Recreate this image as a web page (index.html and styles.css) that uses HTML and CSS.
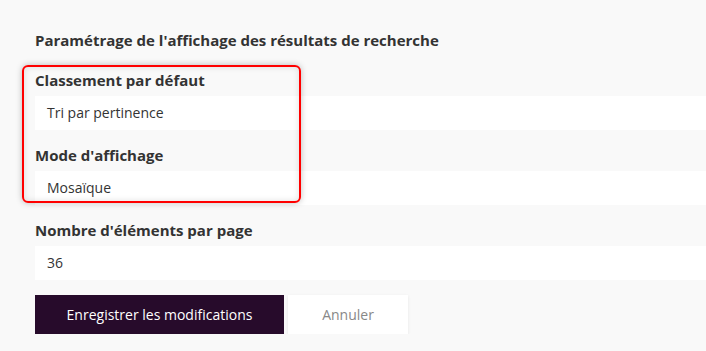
FILE: index.html
```html
<!DOCTYPE html>
<html>

<head>
    <meta charset="utf-8">
    <link rel="stylesheet" href="styles.css">
</head>

<body>
    <div id="page">
        <h3 class="title">Paramétrage de l'affichage des résultats de recherche</h3>

        <div class="field">
            <label>Classement par défaut</label>
            <div class="input">Tri par pertinence</div>
        </div>

        <div class="field">
            <label>Mode d'affichage</label>
            <div class="input">Mosaïque</div>
        </div>

        <div class="field">
            <label>Nombre d'éléments par page</label>
            <div class="input">36</div>
        </div>

        <div class="actions">
            <button class="btn-save">Enregistrer les modifications</button>
            <button class="btn-cancel">Annuler</button>
        </div>

        <!-- cadre rouge d'annotation -->
        <div class="highlight"></div>
    </div>
</body>

</html>
```

FILE: styles.css
```css
* {
    box-sizing: border-box;
}

body {
    margin: 0;
    background-color: #f9f9f9;
    font-family: "Open Sans", "Noto Sans", sans-serif;
    color: #333;
}

#page {
    position: relative;
    padding: 30px 0 0 35px;
}

.title {
    margin: 0 0 19px;
    font-size: 15px;
    line-height: 21px;
    font-weight: 700;
}

.field {
    margin-bottom: 15px;
}

.field label {
    display: block;
    font-size: 15px;
    line-height: 21px;
    font-weight: 700;
    margin-bottom: 5px;
}

.input {
    height: 34px;
    background-color: #fff;
    padding: 0 12px;
    font-size: 14px;
    line-height: 34px;
}

.actions {
    display: flex;
    gap: 4px;
}

.actions button {
    height: 39px;
    border: none;
    font-family: inherit;
    font-size: 14px;
    cursor: pointer;
}

.btn-save {
    width: 249px;
    background-color: #270b2b;
    color: #fff;
}

.btn-cancel {
    width: 120px;
    background-color: #fff;
    color: #888;
    box-shadow: 0 1px 3px rgba(0, 0, 0, 0.08);
}

.highlight {
    position: absolute;
    top: 65px;
    left: 22px;
    width: 279px;
    height: 138px;
    border: 2px solid #f00;
    border-radius: 6px;
    box-shadow: 0 0 6px rgba(0, 0, 0, 0.25), inset 0 0 6px rgba(0, 0, 0, 0.12);
    pointer-events: none;
}
```
